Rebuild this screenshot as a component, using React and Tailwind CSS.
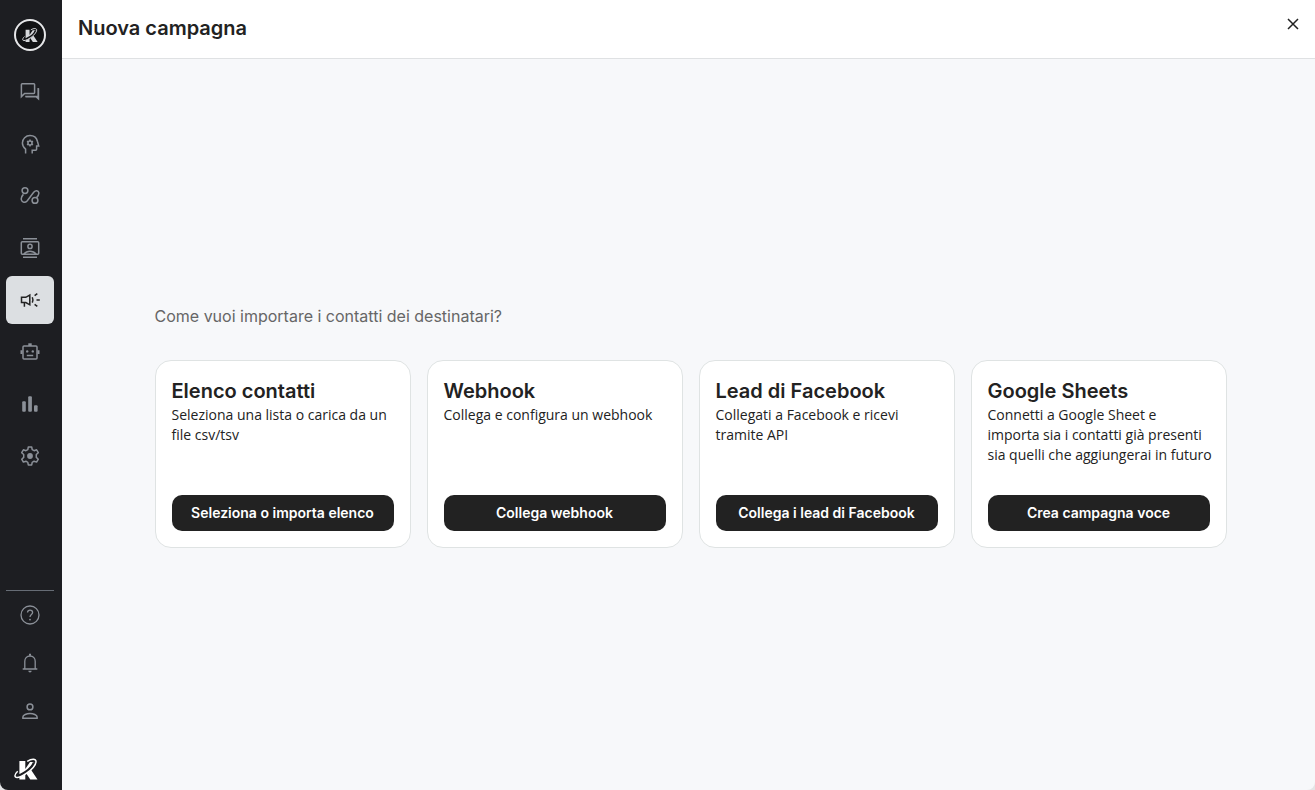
const sources = [
  {
    id: 'list',
    title: 'Elenco contatti',
    description: 'Seleziona una lista o carica da un file csv/tsv',
    action: 'Seleziona o importa elenco',
  },
  {
    id: 'webhook',
    title: 'Webhook',
    description: 'Collega e configura un webhook',
    action: 'Collega webhook',
  },
  {
    id: 'facebook',
    title: 'Lead di Facebook',
    description: 'Collegati a Facebook e ricevi tramite API',
    action: 'Collega i lead di Facebook',
  },
  {
    id: 'sheets',
    title: 'Google Sheets',
    description:
      'Connetti a Google Sheet e\nimporta sia i contatti già presenti\nsia quelli che aggiungerai in futuro',
    action: 'Crea campagna voce',
  },
];

function Icon({ children, strokeWidth = 1.5 }) {
  return (
    <svg
      viewBox="0 0 20 20"
      className="w-5 h-5"
      fill="none"
      stroke="currentColor"
      strokeWidth={strokeWidth}
      aria-hidden="true"
    >
      {children}
    </svg>
  );
}

function ChatIcon() {
  return (
    <Icon>
      <path d="M1.4 14.6V2.6a.8.8 0 0 1 .8-.8h11.6a.8.8 0 0 1 .8.8v8a.8.8 0 0 1-.8.8H4.6z" />
      <path
        d="M17.4 5.9h1.1a.7.7 0 0 1 .7.7v12l-3.4-3.2H5.9a.7.7 0 0 1-.7-.7v-1h12.2z"
        fill="currentColor"
        stroke="none"
      />
    </Icon>
  );
}

function MindIcon() {
  return (
    <Icon>
      <path d="M5.6 19.4v-4.3C3.7 13.5 2.4 11.5 2.4 9c0-4.2 3.4-7.4 7.6-7.4 3.7 0 6.6 2.4 7.4 5.700l1.300 4.600h-2.100v3.400a.9.9 0 0 1-.9.9h-3.500v3.200" />
      <circle cx="10" cy="9" r="2" strokeWidth="1.4" />
      <path
        d="M10 5.500v1.500M10 11v1.500M7 7.250l1.300.75M11.700 10l1.300.75M7 10.750l1.300-.75M11.700 8l1.300-.75"
        strokeWidth="1.5"
      />
    </Icon>
  );
}

function PathIcon() {
  return (
    <Icon>
      <circle cx="5" cy="4.600" r="2.900" />
      <circle cx="15" cy="14.400" r="2.900" />
      <path d="M3.400 8.400c-1.700 1.700-2.500 3.600-2 5.500.7 2.700 3.700 3.200 5.700 1.100l6.600-8.700c1.900-2.300 4.600-2.100 5.100.4.300 1.700-.6 3.300-2.200 4.900" />
    </Icon>
  );
}

function ContactsIcon() {
  return (
    <Icon>
      <path d="M3 .8h14M3 19.200h14" />
      <rect x="1.300" y="3.700" width="17.400" height="12.600" rx="1" />
      <circle cx="10" cy="8.400" r="2.100" />
      <path d="M3.800 16.200c1.600-2 3.800-3 6.200-3s4.600 1 6.200 3" />
    </Icon>
  );
}

function CampaignIcon() {
  return (
    <Icon strokeWidth={1.5}>
      <path d="M1.500 7.300h4.300L9.800 5v9.800l-4-2.300H1.500z" />
      <path d="M4.400 12.800v4M12.300 7.200c.8 1.700.8 3.700 0 5.400M14.600 5.700l2.700-2M16.500 10h3.300M14.600 14.300l2.700 2" />
    </Icon>
  );
}

function BotIcon() {
  return (
    <Icon>
      <path d="M10 1.300v2.700" strokeWidth="3.400" />
      <rect x="3" y="4.100" width="14" height="13" rx="1" />
      <path d="M1.500 8.300v3.700M18.500 8.300v3.700" strokeWidth="2" />
      <path d="M6.800 13.500h6.400" />
      <circle cx="7.200" cy="9.400" r="1.200" fill="currentColor" stroke="none" />
      <circle cx="12.800" cy="9.400" r="1.200" fill="currentColor" stroke="none" />
    </Icon>
  );
}

function ChartIcon() {
  return (
    <Icon>
      <g fill="currentColor" stroke="none">
        <rect x="2.200" y="7.200" width="3.600" height="10.500" rx="1" />
        <rect x="8.200" y="2.200" width="3.700" height="15.500" rx="1" />
        <rect x="14" y="11.200" width="3.600" height="6.500" rx="1" />
      </g>
    </Icon>
  );
}

function SettingsIcon() {
  return (
    <Icon>
      <path
        strokeLinejoin="round"
        d="M8.300 1h3.400l.5 2.600 1.900 1.100 2.500-.9 1.700 2.900-2 1.800v2.900l2 1.800-1.700 2.900-2.500-.9-1.900 1.100-.5 2.600H8.300l-.5-2.600-1.900-1.100-2.500.9-1.700-2.900 2-1.800V8.500l-2-1.800 1.700-2.900 2.500.9 1.900-1.100z"
      />
      <circle cx="10" cy="10" r="2.900" fill="currentColor" stroke="none" />
    </Icon>
  );
}

function HelpIcon() {
  return (
    <Icon strokeWidth={1.3}>
      <circle cx="10" cy="10" r="9" />
      <path d="M7.500 7.500c.2-1.500 1.200-2.300 2.500-2.300 1.500 0 2.600.9 2.600 2.300 0 2-2.600 2.200-2.600 4.600" />
      <circle cx="10" cy="14.600" r=".9" fill="currentColor" stroke="none" />
    </Icon>
  );
}

function BellIcon() {
  return (
    <Icon strokeWidth={1.3}>
      <path d="M2.700 16h14.600M4.800 16V8.200C4.800 5.200 7 3 10 3s5.200 2.200 5.200 5.200V16" />
      <path d="M10 .8v2" strokeWidth="2" />
      <path d="M8.300 17.700h3.400a1.700 1.700 0 0 1-3.400 0z" fill="currentColor" stroke="none" />
    </Icon>
  );
}

function PersonIcon() {
  return (
    <Icon>
      <circle cx="10" cy="5.900" r="2.900" />
      <path d="M2.900 17.200v-1.300c0-2 3.700-3.400 7.100-3.400s7.100 1.400 7.100 3.400v1.300z" />
    </Icon>
  );
}

function LogoMark({ className, cut }) {
  return (
    <svg viewBox="0 0 24 22" className={className} fill="none" aria-hidden="true">
      <path d="M5.400 3h5.900v8L16 4h4.500l-4 7 7 10.500h-7.200l-4-6-1 1.500v4.500H5.400z" fill="currentColor" />
      <path
        d="M20.300 4.500c-.8 3-4.300 6.900-8.600 9.800-3.700 2.500-7.200 3.900-9.200 3.900"
        stroke={cut}
        strokeWidth="3"
      />
      <path
        d="M13.200 3.300c4.300-2.600 8.900-2.900 8.800.4-.2 3.600-4.700 8.300-9.700 11.700C7 18.900 2.500 20.300 1.300 18.700c-.8-1.100.1-3.200 2.400-5.400"
        stroke="currentColor"
        strokeWidth="1.500"
      />
    </svg>
  );
}

const mainNav = [
  { label: 'Conversazioni', icon: ChatIcon },
  { label: 'Intelligenza', icon: MindIcon },
  { label: 'Flussi', icon: PathIcon },
  { label: 'Contatti', icon: ContactsIcon },
  { label: 'Campagne', icon: CampaignIcon, active: true },
  { label: 'Assistenti', icon: BotIcon },
  { label: 'Statistiche', icon: ChartIcon },
  { label: 'Impostazioni', icon: SettingsIcon },
];

const footerNav = [
  { label: 'Aiuto', icon: HelpIcon },
  { label: 'Notifiche', icon: BellIcon },
  { label: 'Profilo', icon: PersonIcon },
];

function NavItem({ item }) {
  const ItemIcon = item.icon;
  return (
    <a
      href="#"
      aria-label={item.label}
      aria-current={item.active ? 'page' : undefined}
      className={`flex h-12 w-12 items-center justify-center rounded-md ${
        item.active ? 'bg-[#dcdfe2] text-[#222]' : 'text-[#8b9098]'
      }`}
    >
      <ItemIcon />
    </a>
  );
}

function Sidebar() {
  return (
    <aside className="flex w-[62px] shrink-0 flex-col rounded-bl-lg bg-[#1d1e22] pl-1.5 pr-2 pt-[19px] pb-2.5">
      <a
        href="#"
        aria-label="Home"
        className="mx-auto flex h-8 w-8 items-center justify-center rounded-full border-2 border-[#e6e7e9] bg-[#111214] text-[#d5d7da]"
      >
        <LogoMark className="h-4 w-4" cut="#111214" />
      </a>
      <nav className="mt-[17px] flex flex-col gap-1">
        {mainNav.map((item) => (
          <NavItem key={item.label} item={item} />
        ))}
      </nav>
      <nav className="mt-auto flex flex-col border-t border-[#666c75]">
        {footerNav.map((item) => (
          <NavItem key={item.label} item={item} />
        ))}
      </nav>
      <div className="mt-[23px] pl-2 text-white">
        <LogoMark className="h-[22px] w-6" cut="#1d1e22" />
      </div>
    </aside>
  );
}

function SourceCard({ source }) {
  return (
    <article className="flex flex-col rounded-2xl border border-[#dfe3e3] bg-white p-4">
      <h2 className="text-xl leading-7 font-semibold">{source.title}</h2>
      <p className="-mr-2 whitespace-pre-line font-['Open_Sans',sans-serif] text-sm leading-5">
        {source.description}
      </p>
      <div className="mt-auto pt-[30px]">
        <button
          type="button"
          className="h-9 w-full rounded-[10px] bg-[#222] text-sm font-semibold text-white"
        >
          {source.action}
        </button>
      </div>
    </article>
  );
}

export default function App() {
  return (
    <div className="flex min-h-screen bg-[#e4e5e6] font-['Inter',sans-serif] text-[#222]">
      <Sidebar />
      <div className="flex min-w-0 flex-1 flex-col rounded-br-lg bg-[#f7f8fa]">
        <header className="flex items-start justify-between border-b border-[#dfe1e3] bg-white px-4 pt-3.5 pb-4">
          <h1 className="text-xl leading-7 font-semibold">Nuova campagna</h1>
          <button type="button" aria-label="Chiudi" className="mt-1">
            <svg viewBox="0 0 12 12" className="h-3 w-3" stroke="currentColor" strokeWidth="1.5" aria-hidden="true">
              <path d="M1 1l10 10M11 1L1 11" />
            </svg>
          </button>
        </header>
        <main className="flex flex-1 flex-col items-center justify-center pt-0.5 pl-1">
          <section className="w-full max-w-[1072px]">
            <p className="text-base leading-6 text-[#666]">Come vuoi importare i contatti dei destinatari?</p>
            <div className="mt-8 grid grid-cols-4 gap-4">
              {sources.map((source) => (
                <SourceCard key={source.id} source={source} />
              ))}
            </div>
          </section>
        </main>
      </div>
    </div>
  );
}
